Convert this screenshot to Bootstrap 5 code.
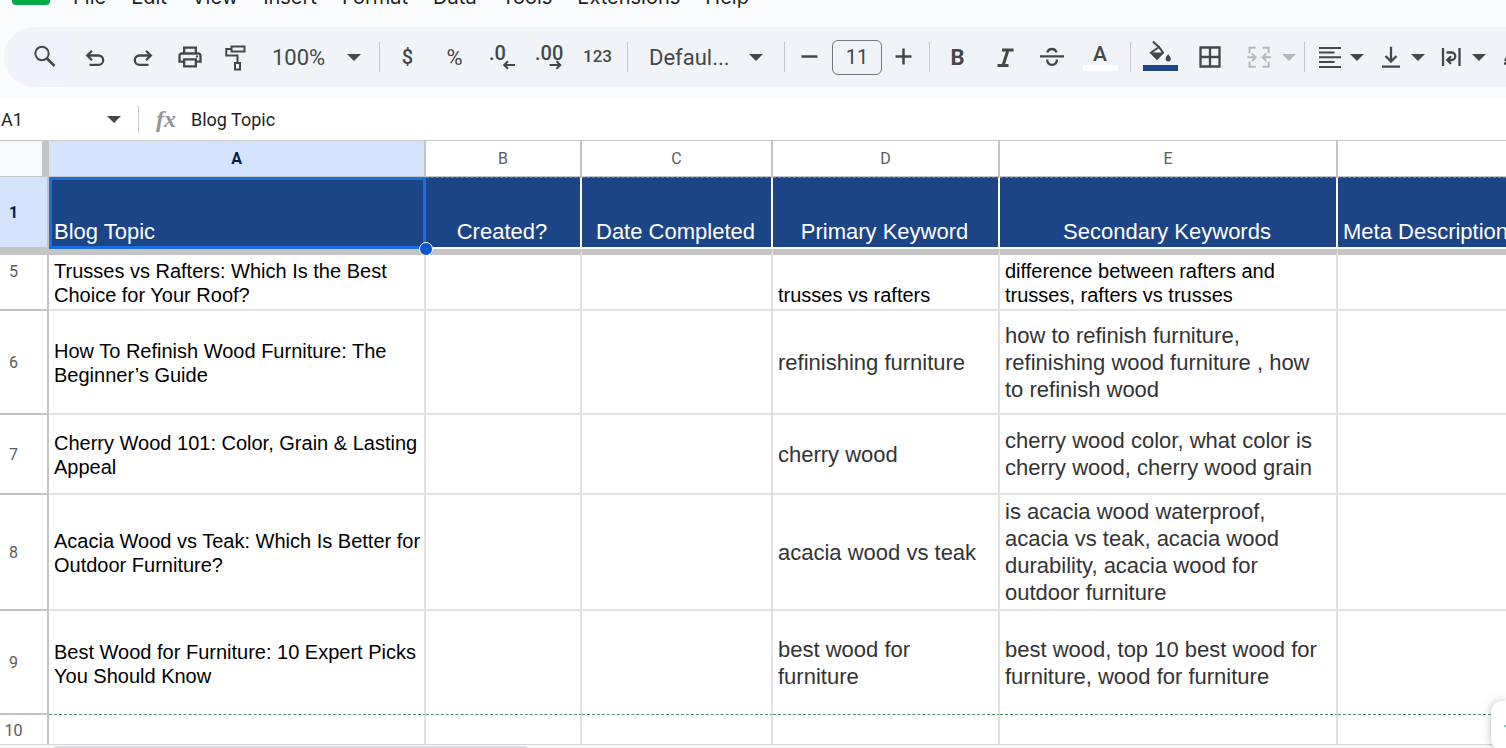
<!DOCTYPE html>
<html lang="en">
<head>
<meta charset="utf-8">
<meta name="viewport" content="width=device-width, initial-scale=1">
<title>Blog Topics</title>
<link href="https://cdn.jsdelivr.net/npm/bootstrap@5.3.0/dist/css/bootstrap.min.css" rel="stylesheet">
<style>
  body { font-family: Roboto, "Liberation Sans", sans-serif; color: #1f1f1f; background: #fff; height: 100vh; }
  .app-top { background: #f9fbfd; height: 99px; }
  /* menu bar, scrolled partly out of view */
  .menu-row { height: 27px; padding-left: 12px; }
  .sheet-logo { width: 38px; height: 40px; border-radius: 4px; background: #00ac47; margin-top: -35px; margin-right: 11px; }
  .menu-row nav { margin-top: -18px; gap: 1px; }
  .menu-row a { font: 20px/30px Inter, sans-serif; color: #1f1f1f; padding: 0 12px; }
  .tools { height: 60px; margin-left: 4px; padding-left: 13px; background: #f0f4f9; border-radius: 30px 0 0 30px; color: #444746; }
  .tools button, .tools svg, .rule { flex: none; }
  .tools button { border: 0; background: none; padding: 0; height: 48px; width: 47px; color: inherit; display: flex; align-items: center; justify-content: center; font-size: 20px; }
  .tools button.tool-wide { width: 51px; }
  .tools button.tool-search { width: 55px; background: #eef2fb; border-radius: 4px; }
  .tools button.tool-menu { width: 61px; gap: 6px; padding-left: 7px; justify-content: flex-start; }
  .tools button.tool-merge { width: 67px; gap: 9px; padding-left: 12px; justify-content: flex-start; color: #b4b7ba; }
  .tools button.tool-zoom { width: 115px; padding: 0 14px 0 12px; font-size: 22px; justify-content: space-between; }
  .tools button.tool-font { width: 148px; padding: 0 17px; font-size: 22px; justify-content: space-between; }
  .tools button.tool-step { width: 24px; }
  .tools .tool-percent { font-size: 22px; }
  .tools .n123 { font-size: 17px; font-weight: 500; }
  .tools .bold-b { font-size: 22px; font-weight: 700; }
  .tools input { width: 50px; height: 35px; border: 1px solid #747775; border-radius: 6px; background: none; text-align: center; font-size: 20px; color: inherit; padding: 0; }
  .stepper { gap: 10px; padding: 0 9px; flex: none; }
  .rule { width: 1px; height: 30px; background: #c7c7c7; margin: 0 4px; }
  .ico { width: 28px; height: 28px; overflow: visible; fill: none; stroke: currentColor; stroke-width: 2; }
  .ico text, .ico .solid { fill: currentColor; stroke: none; }
  .ico text { font: 500 20px Roboto, sans-serif; }
  .caret { width: 14px; height: 7px; fill: currentColor; }
  .formula { height: 41px; font-size: 18px; padding: 0 0 1px 1px; }
  .name-box { width: 120px; color: #444746; }
  .name-box input, .formula .entry { border: 0; padding: 0; background: none; font-size: 18px; color: #1f1f1f; }
  .name-box input { width: 90px; }
  .fx { font: italic 700 24px/24px "Liberation Serif", serif; color: #929598; width: 35px; }
  .formula .rule { height: 26px; margin: 0 17px 0 17px; }
  .grid { table-layout: fixed; width: 100%; border-collapse: separate; border-spacing: 0; border-top: 1px solid #c4c7c5; }
  .grid th, .grid td { border: 0 solid #e1e1e1; border-width: 0 2px 2px 0; padding: 0; font-weight: 400; }
  .grid tr > :last-child { border-right-width: 0; }
  .grid td { font: 20px/24px "Liberation Sans", Arial, sans-serif; color: #000; padding: 2px 0 0 5px; vertical-align: middle; }
  .grid th { border-color: #c4c4c4; text-align: center; font-size: 16px; line-height: 20px; color: #575b5f; vertical-align: middle; }
  .grid tbody th { padding: 2px 20px 0 0; }
  .grid thead th { height: 36px; border-bottom-width: 1px; }
  .grid thead .corner { border-right-width: 7px; background: #f8f9fa; }
  .grid th.picked { background: #d3e3fd; color: #041e49; font-weight: 700; }
  .grid .r-head td { height: 72px; background: #1c4587; color: #fff; font-size: 22px; line-height: 26px; text-align: center; vertical-align: bottom; padding: 0 2px 2px 0; border-color: #fff; border-top: 1px dashed #4f8f78; white-space: nowrap; }
  .grid .r-head td.from-left { text-align: left; padding-left: 5px; }
  .grid .r-five > * { border-top: 6px solid #c4c4c4; height: 62px; }
  .grid .r-five th { padding-bottom: 22px; }
  .grid .r-five td { vertical-align: bottom; padding-bottom: 2px; }
  .grid .r-tall > * { height: 104px; }
  .grid .r-seven > * { height: 80px; }
  .grid .r-eight > * { height: 116px; }
  .grid .r-last td { border-bottom: 1px dashed #4a9468; }
  .grid .r-ten > * { height: 30px; border-bottom-width: 1px; border-bottom-color: #d5d5d5; }
  .grid .kw { font-size: 22px; line-height: 27px; color: #333; padding: 0 9px 0 5px; }
  .c-num { width: 49px; } .c-a { width: 377px; } .c-b { width: 156px; } .c-c { width: 191px; } .c-d { width: 227px; } .c-e { width: 338px; }
  .sel-box { inset: -1px -2px -2px 0; border: 3px solid #1a6fe0; }
  .sel-dot { width: 14px; height: 14px; right: -9px; bottom: -9px; border: 1px solid #fff; border-radius: 50%; background: #0b57d0; }
  .scroll-strip { height: 4px; background: #f8f9fa; padding: 1px 0 0 53px; }
  .scroll-thumb { width: 475px; height: 8px; border-radius: 4px; background: #dadce0; }
  .side-tab { right: 0; bottom: -2px; width: 15px; height: 49px; border-radius: 11px 0 0 11px; background: #fff; box-shadow: 0 0 8px rgba(60,64,67,.35); }
  .side-tab i { width: 2px; height: 2px; background: #8ccfb0; }
</style>
</head>
<body class="overflow-hidden position-relative">
<header class="app-top overflow-hidden">
  <div class="menu-row d-flex overflow-hidden">
    <div class="sheet-logo"></div>
    <nav class="d-flex" aria-label="Menu">
      <a class="text-decoration-none" href="#">File</a><a class="text-decoration-none" href="#">Edit</a><a class="text-decoration-none" href="#">View</a><a class="text-decoration-none" href="#">Insert</a><a class="text-decoration-none" href="#">Format</a><a class="text-decoration-none" href="#">Data</a><a class="text-decoration-none" href="#">Tools</a><a class="text-decoration-none" href="#">Extensions</a><a class="text-decoration-none" href="#">Help</a>
    </nav>
  </div>
  <div class="tools d-flex align-items-center overflow-hidden" role="toolbar" aria-label="Formatting">
    <button type="button" class="tool-search" aria-label="Search"><svg class="ico" viewBox="0 0 28 28"><circle cx="11" cy="10.5" r="6.7"/><path d="M16 15.5l7.5 7.5" stroke-width="2.5"/></svg></button>
    <button type="button" aria-label="Undo"><svg class="ico" viewBox="0 0 28 28"><path d="M10 7.700L5.200 12.500l4.800 4.800M5.200 12.500H16.500a4.700 4.700 0 0 1 0 9.400H7.500" stroke-width="2.300"/></svg></button>
    <button type="button" aria-label="Redo"><svg class="ico" viewBox="0 0 28 28"><path d="M17 7.700l4.800 4.800-4.800 4.800M21.800 12.500H10.500a4.700 4.700 0 0 0 0 9.400h9" stroke-width="2.300"/></svg></button>
    <button type="button" aria-label="Print"><svg class="ico" viewBox="0 0 24 24"><path class="solid" d="M19 8h-1V3H6v5H5c-1.66 0-3 1.34-3 3v6h4v4h12v-4h4v-6c0-1.66-1.34-3-3-3zM8 5h8v3H8V5zm8 12v2H8v-4h8v2zm2-2v-2H6v2H4v-4c0-.55.45-1 1-1h14c.55 0 1 .45 1 1v4h-2z"/><circle class="solid" cx="18" cy="11.5" r="1"/></svg></button>
    <button type="button" aria-label="Paint format"><svg class="ico" viewBox="0 0 28 28"><path d="M8.5 3.5h13v5h-13zM8.5 6H3.3v6.6h11.2V19M12 20h5v6.5h-5z"/></svg></button>
    <button type="button" class="tool-zoom">100% <svg class="caret" viewBox="0 0 14 7"><path d="M0 0h14L7 7z"/></svg></button>
    <span class="rule"></span>
    <button type="button" class="fw-medium">$</button>
    <button type="button" class="tool-percent">%</button>
    <button type="button" aria-label="Decrease decimal places"><svg class="ico" viewBox="0 0 28 28"><text x="1" y="17">.0</text><path d="M27 22H16.500M20 18.300l-3.800 3.700 3.800 3.700"/></svg></button>
    <button type="button" aria-label="Increase decimal places"><svg class="ico" viewBox="0 0 28 28"><text x="0" y="17">.00</text><path d="M14.500 22H25M21.500 18.300l3.800 3.700-3.800 3.700"/></svg></button>
    <button type="button" class="tool-wide n123">123</button>
    <span class="rule"></span>
    <button type="button" class="tool-font">Defaul... <svg class="caret" viewBox="0 0 14 7"><path d="M0 0h14L7 7z"/></svg></button>
    <span class="rule"></span>
    <div class="stepper d-flex align-items-center">
      <button type="button" class="tool-step" aria-label="Decrease font size"><svg class="ico" viewBox="0 0 28 28"><path d="M5.500 13.500h16" stroke-width="2.500"/></svg></button>
      <input type="text" value="11" aria-label="Font size">
      <button type="button" class="tool-step" aria-label="Increase font size"><svg class="ico" viewBox="0 0 28 28"><path d="M5.500 13.500h16M13.500 5.500v16" stroke-width="2.500"/></svg></button>
    </div>
    <span class="rule"></span>
    <button type="button" class="bold-b">B</button>
    <button type="button" aria-label="Italic"><svg class="ico" viewBox="0 0 28 28"><path d="M11 7h11.500M6.500 22.500H17.500M17 7l-5 15.500" stroke-width="3"/></svg></button>
    <button type="button" aria-label="Strikethrough"><svg class="ico" viewBox="0 0 28 28"><path d="M2 13.300h24M9.200 9.500c.8-2.400 2.400-3.500 4.700-3.500s3.900 1.100 4.700 3.500M9.200 16.500c0 3.500 2 5.300 4.800 5.300s4.900-1.800 4.900-5.300" stroke-width="2.300"/></svg></button>
    <button type="button" class="tool-wide" aria-label="Text color"><svg class="ico" viewBox="0 0 28 28"><text x="6" y="18" style="font-size:21px">A</text><path d="M-4 25h35" stroke="#fff" stroke-width="6"/></svg></button>
    <span class="rule"></span>
    <button type="button" class="tool-wide" aria-label="Fill color"><svg class="ico" viewBox="0 0 28 28"><path d="M6-1.500l6.500 6.200M12 4L4 9.700l6 6 6-6z"/><path class="solid" d="M3 9.500h14l-7 7.500zM21.200 11c1.400 2 2.600 3.400 2.600 4.800a2.600 2.600 0 0 1-5.200 0c0-1.400 1.200-2.800 2.600-4.800z"/><path d="M-4 25h35" stroke="#1c4587" stroke-width="6"/></svg></button>
    <button type="button" aria-label="Borders"><svg class="ico" viewBox="0 0 28 28"><path d="M4.500 4.500h19v19h-19zM14 4.500v19M4.500 14h19" stroke-width="2.300"/></svg></button>
    <button type="button" class="tool-merge" aria-label="Merge cells" disabled><svg class="ico" viewBox="0 0 28 28"><path d="M10.700 4.800H4.500v5.400M4.500 18.500v5.200h6.200M17.500 4.800h6.200v5.400M23.700 18.500v5.200h-6.200M2.300 14.300h7.500M7 10.500l3.700 3.800L7 18M26 14.300h-7.500M21.300 10.500l-3.700 3.800 3.700 3.700"/></svg><svg class="caret" viewBox="0 0 14 7"><path d="M0 0h14L7 7z"/></svg></button>
    <span class="rule"></span>
    <button type="button" class="tool-menu" aria-label="Horizontal align"><svg class="ico" viewBox="0 0 28 28"><path d="M3 5h22M3 9.500h15.500M3 14.300h22M3 19h15.500M3 24h22"/></svg><svg class="caret" viewBox="0 0 14 7"><path d="M0 0h14L7 7z"/></svg></button>
    <button type="button" class="tool-menu" aria-label="Vertical align"><svg class="ico" viewBox="0 0 28 28"><path d="M14 3.700v15M8.500 13l5.500 5.500 5.500-5.500M5 23.700h18" stroke-width="2.300"/></svg><svg class="caret" viewBox="0 0 14 7"><path d="M0 0h14L7 7z"/></svg></button>
    <button type="button" class="tool-menu" aria-label="Text wrapping"><svg class="ico" viewBox="0 0 28 28"><path d="M5 5v18M21.500 5v18M8.500 9.500H13.500a3.700 3.700 0 0 1 0 7.500H9.500M13 13.300L9.300 17l3.700 3.700" stroke-width="2.300"/></svg><svg class="caret" viewBox="0 0 14 7"><path d="M0 0h14L7 7z"/></svg></button>
    <button type="button" class="tool-menu" aria-label="Text rotation"><svg class="ico" viewBox="0 0 28 28"><path d="M6 18L13 4l7 14M5 20.500h18" stroke-width="2.300"/></svg></button>
  </div>
</header>
<div class="formula d-flex align-items-center">
  <div class="name-box d-flex align-items-center justify-content-between"><input type="text" value="A1" aria-label="Name box"><svg class="caret" viewBox="0 0 14 7"><path d="M0 0h14L7 7z"/></svg></div>
  <span class="rule"></span>
  <span class="fx">fx</span>
  <input class="entry flex-grow-1" type="text" value="Blog Topic" aria-label="Formula">
</div>
<table class="grid">
  <colgroup><col class="c-num"><col class="c-a"><col class="c-b"><col class="c-c"><col class="c-d"><col class="c-e"><col></colgroup>
  <thead>
    <tr><th class="corner"></th><th class="picked" scope="col">A</th><th scope="col">B</th><th scope="col">C</th><th scope="col">D</th><th scope="col">E</th><th scope="col"></th></tr>
  </thead>
  <tbody>
    <tr class="r-head"><th class="picked" scope="row">1</th><td class="from-left position-relative">Blog Topic<span class="sel-box position-absolute"></span><span class="sel-dot position-absolute"></span></td><td>Created?</td><td>Date Completed</td><td>Primary Keyword</td><td>Secondary Keywords</td><td class="from-left">Meta Description</td></tr>
    <tr class="r-five"><th scope="row">5</th><td>Trusses vs Rafters: Which Is the Best Choice for Your Roof?</td><td></td><td></td><td>trusses vs rafters</td><td>difference between rafters and trusses, rafters vs trusses</td><td></td></tr>
    <tr class="r-tall"><th scope="row">6</th><td>How To Refinish Wood Furniture: The Beginner’s Guide</td><td></td><td></td><td class="kw">refinishing furniture</td><td class="kw">how to refinish furniture, refinishing wood furniture , how to refinish wood</td><td></td></tr>
    <tr class="r-seven"><th scope="row">7</th><td>Cherry Wood 101: Color, Grain &amp; Lasting Appeal</td><td></td><td></td><td class="kw">cherry wood</td><td class="kw">cherry wood color, what color is cherry wood, cherry wood grain</td><td></td></tr>
    <tr class="r-eight"><th scope="row">8</th><td>Acacia Wood vs Teak: Which Is Better for Outdoor Furniture?</td><td></td><td></td><td class="kw">acacia wood vs teak</td><td class="kw">is acacia wood waterproof, acacia vs teak, acacia wood durability, acacia wood for outdoor furniture</td><td></td></tr>
    <tr class="r-tall r-last"><th scope="row">9</th><td>Best Wood for Furniture: 10 Expert Picks You Should Know</td><td></td><td></td><td class="kw">best wood for furniture</td><td class="kw">best wood, top 10 best wood for furniture, wood for furniture</td><td></td></tr>
    <tr class="r-ten"><th scope="row">10</th><td></td><td></td><td></td><td></td><td></td><td></td></tr>
  </tbody>
</table>
<div class="scroll-strip overflow-hidden"><div class="scroll-thumb"></div></div>
<aside class="side-tab position-absolute d-flex align-items-center justify-content-end"><i></i></aside>
<script src="https://cdn.jsdelivr.net/npm/bootstrap@5.3.0/dist/js/bootstrap.bundle.min.js"></script>
</body>
</html>
